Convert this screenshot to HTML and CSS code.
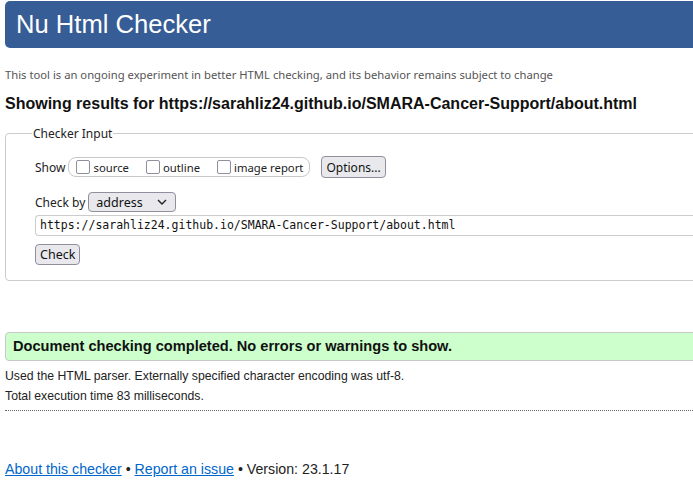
FILE: index.html
```html
<!DOCTYPE html>
<html>
<head>
<meta charset="utf-8">
<link rel="stylesheet" href="styles.css">
</head>
<body>
<div class="page">
  <header class="banner"><h1>Nu Html Checker</h1></header>
  <p class="intro">This tool is an ongoing experiment in better HTML checking, and its behavior remains subject to change</p>
  <h2 class="results">Showing results for https://sarahliz24.github.io/SMARA-Cancer-Support/about.html</h2>
  <form class="form">
    <fieldset class="input">
      <legend>Checker Input</legend>
      <div class="row show-row">
        <span class="label">Show</span>
        <div class="show-box">
          <label class="opt"><span class="cb"></span>source</label>
          <label class="opt"><span class="cb"></span>outline</label>
          <label class="opt"><span class="cb"></span>image report</label>
        </div>
        <span class="btn options">Options...</span>
      </div>
      <div class="row by-row">
        <span class="label">Check by</span>
        <span class="select">address
          <svg class="chev" width="10" height="6" viewBox="0 0 10 6"><path d="M1 1 L5 5 L9 1" fill="none" stroke="#222" stroke-width="1.4"/></svg>
        </span>
      </div>
      <div class="url">https://sarahliz24.github.io/SMARA-Cancer-Support/about.html</div>
      <div class="row"><span class="btn check">Check</span></div>
    </fieldset>
  </form>
  <p class="success">Document checking completed. No errors or warnings to show.</p>
  <p class="details">Used the HTML parser. Externally specified character encoding was utf-8.</p>
  <p class="details">Total execution time 83 milliseconds.</p>
  <hr class="sep">
  <p class="footer"><a href="#">About this checker</a> • <a href="#">Report an issue</a> • Version: 23.1.17</p>
</div>
</body>
</html>
```
FILE: styles.css
```css
html, body { margin: 0; padding: 0; background: #fff; overflow: hidden; }
body { font-family: "Liberation Sans", Arial, sans-serif; color: #222; }
.page { width: 820px; padding: 1px 0 0 5px; }
.banner {
  background: #365d95; border-radius: 5px; height: 47px;
  display: flex; align-items: center; padding-left: 11px;
}
.banner h1 { margin: 0; font-weight: normal; color: #fff; font-size: 25.6px; line-height: 1; }
.intro {
  margin: 20px 0 0; font-family: "Noto Sans", "Open Sans", sans-serif; font-size: 11.25px;
  color: #555; line-height: 14px;
}
.results { margin: 12px 0 0; font-size: 16px; font-weight: bold; color: #111; line-height: 20px; }
.form { margin: 11px 0 0; }
.input {
  margin: 0; border: 1px solid #ccc; border-radius: 4px; padding: 6px 29px 15px;
  font-family: "Noto Sans", "Open Sans", sans-serif; font-size: 12px; color: #222;
}
.input legend { padding: 0 1px; margin-left: -3px; font-size: 12px; }
.row { display: flex; align-items: center; }
.label { margin-right: 2px; }
.show-row { margin-top: 8px; }
.show-row .label { margin-right: 3px; }
.show-box {
  box-sizing: border-box; display: flex; align-items: center; border: 1px solid #c8c8c8; border-radius: 8px;
  height: 20px; padding: 0 6px 0 7px;
}
.opt { display: flex; align-items: center; font-size: 11.3px; margin-right: 17px; }
.opt:last-child { margin-right: 0; }
.cb {
  width: 12px; height: 12px; border: 1px solid #8f8f9d; border-radius: 2px; margin-right: 3px;
  background: #fff;
}
.btn {
  box-sizing: border-box; display: inline-flex; align-items: center; background: #e9e9ed; border: 1px solid #8f8f9d;
  border-radius: 4px; padding: 0 4px; height: 22px; font-size: 12px; color: #111;
}
.options { margin-left: 11px; }
.by-row { margin-top: 14px; }
.select {
  box-sizing: border-box; display: inline-flex; align-items: center; justify-content: space-between; width: 88px;
  height: 20px; border: 1px solid #8f8f9d; border-radius: 4px; background: #e9e9ed;
  padding: 0 8px 0 7px; font-size: 12.5px; color: #111; margin-left: 1px;
}
.url {
  box-sizing: border-box; margin-top: 3px; height: 21px; border: 1px solid #ccc; border-right: none; border-radius: 4px 0 0 4px;
  font-family: "DejaVu Sans Mono", monospace; font-size: 11.5px; line-height: 19px; padding-left: 4px;
  color: #111; margin-right: -30px;
}
.row .check { margin-top: 8px; padding: 0 4px; height: 21px; font-size: 12.5px; }
.success {
  margin: 51px 0 0; background: #ccffcc; border: 1px solid #c8c8c8; border-radius: 4px;
  font-weight: bold; font-size: 14.6px; color: #111; padding: 0 0 0 7px; height: 27px; line-height: 27px;
}
.details { margin: 0; font-size: 12.25px; line-height: 20px; color: #222; }
.success + .details { margin-top: 5px; }
.sep { margin: 4px 0 0; border: none; border-top: 1px dotted #666; height: 0; }
.footer { margin: 49px 0 0; font-size: 14.2px; line-height: 18px; color: #222; }
.footer a { color: #0066cc; }
```
